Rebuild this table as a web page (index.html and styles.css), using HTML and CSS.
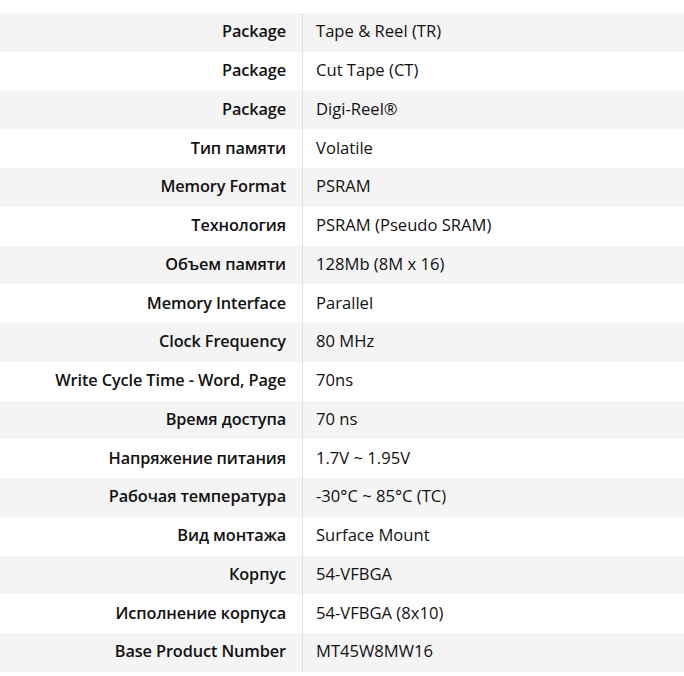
FILE: index.html
```html
<!DOCTYPE html>
<html lang="ru">
<head>
<meta charset="utf-8">
<link rel="stylesheet" href="styles.css">
</head>
<body>
<table class="specs">
<tbody>
<tr><th>Package</th><td>Tape &amp; Reel (TR)</td></tr>
<tr><th>Package</th><td>Cut Tape (CT)</td></tr>
<tr><th>Package</th><td>Digi-Reel®</td></tr>
<tr><th>Тип памяти</th><td>Volatile</td></tr>
<tr><th>Memory Format</th><td>PSRAM</td></tr>
<tr><th>Технология</th><td>PSRAM (Pseudo SRAM)</td></tr>
<tr><th>Объем памяти</th><td>128Mb (8M x 16)</td></tr>
<tr><th>Memory Interface</th><td>Parallel</td></tr>
<tr><th>Clock Frequency</th><td>80 MHz</td></tr>
<tr><th>Write Cycle Time - Word, Page</th><td>70ns</td></tr>
<tr><th>Время доступа</th><td>70 ns</td></tr>
<tr><th>Напряжение питания</th><td>1.7V ~ 1.95V</td></tr>
<tr><th>Рабочая температура</th><td>-30°C ~ 85°C (TC)</td></tr>
<tr><th>Вид монтажа</th><td>Surface Mount</td></tr>
<tr><th>Корпус</th><td>54-VFBGA</td></tr>
<tr><th>Исполнение корпуса</th><td>54-VFBGA (8x10)</td></tr>
<tr><th>Base Product Number</th><td>MT45W8MW16</td></tr>
</tbody>
</table>
</body>
</html>
```
FILE: styles.css
```css
html, body {
  margin: 0;
  padding: 0;
  background: #fff;
}
body {
  padding-top: 13px;
  font-family: "Open Sans", "Noto Sans", sans-serif;
  font-size: 16px;
  color: #111;
}
.specs {
  width: 684px;
  border-collapse: collapse;
  table-layout: fixed;
}
.specs tr {
  height: 38.75px;
}
.specs tr:nth-child(odd) {
  background: #f4f4f4;
}
.specs th {
  width: 286px;
  padding: 0 16px 2px 0;
  text-align: right;
  font-weight: 600;
  font-size: 16.3px;
  border-right: 1px solid #e2e2e2;
  white-space: nowrap;
  letter-spacing: -0.1px;
}
.specs td {
  padding: 0 0 3px 13px;
  font-weight: 400;
  font-size: 16.6px;
  letter-spacing: 0;
}
```
